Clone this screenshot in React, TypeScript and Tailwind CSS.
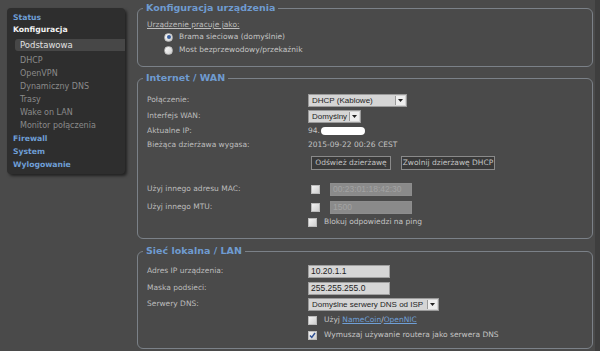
import React from 'react';

const labelFont = { fontFamily: '"DejaVu Sans", Verdana, sans-serif' };
const inputFont = { fontFamily: '"Liberation Sans", Arial, sans-serif' };

const Legend: React.FC<{ title: string }> = ({ title }) => (
  <span
    className="absolute left-[5px] top-[-8px] bg-[#4a4a4a] px-[3px] text-[9.5px] font-bold leading-[14px] text-[#6f9bd0]"
    style={labelFont}
  >
    {title}
  </span>
);

const Box: React.FC<{ title: string; className: string; children: React.ReactNode }> = ({ title, className, children }) => (
  <div className={`relative rounded-[6px] border border-[#7b8188] ${className}`}>
    <Legend title={title} />
    {children}
  </div>
);

const Row: React.FC<{ label?: string; className?: string; children?: React.ReactNode }> = ({ label, className = '', children }) => (
  <div className={`flex h-[14px] items-center ${className}`}>
    <div className="w-[170px] shrink-0 pl-[9px] text-[7.5px] text-[#bdbdbd]" style={labelFont}>
      {label}
    </div>
    <div className="flex items-center">{children}</div>
  </div>
);

const Select: React.FC<{ value: string; width: string }> = ({ value, width }) => (
  <div className={`flex h-[13px] items-stretch ${width} border border-[#9a9a9a] bg-[#d5d5d5]`}>
    <span
      className="flex-1 overflow-hidden whitespace-nowrap pl-[3px] text-[8px] leading-[11px] text-[#1e1e1e]"
      style={inputFont}
    >
      {value}
    </span>
    <span className="my-[1px] mr-[1px] flex w-[10px] shrink-0 items-center justify-center border-l border-[#9a9a9a] bg-[#eeeeee]">
      <svg width="5" height="3" viewBox="0 0 5 3">
        <path d="M0 0h5L2.5 3z" fill="#222" />
      </svg>
    </span>
  </div>
);

const TextInput: React.FC<{ value: string; width?: string; disabled?: boolean }> = ({ value, width = 'w-[82px]', disabled }) => (
  <div
    className={`h-[13px] ${width} border pl-[2px] text-[8.5px] leading-[11px] ${
      disabled ? 'border-[#8d8d8d] bg-[#8a8a8a] text-[#a3a3a3]' : 'border-[#a0a0a0] bg-[#d6d6d6] text-[#1e1e1e]'
    }`}
    style={inputFont}
  >
    {value}
  </div>
);

const Check: React.FC<{ checked?: boolean; className?: string }> = ({ checked, className = '' }) => (
  <span
    className={`flex h-[9px] w-[9px] items-center justify-center border border-[#bcbcbc] bg-gradient-to-br from-[#f4f4f4] to-[#cfcfcf] ${className}`}
  >
    {checked && (
      <svg width="7" height="7" viewBox="0 0 7 7">
        <path d="M1 3.5l1.8 2L6 1" stroke="#2d4f93" strokeWidth="1.4" fill="none" />
      </svg>
    )}
  </span>
);

const Radio: React.FC<{ checked?: boolean }> = ({ checked }) => (
  <span className="flex h-[9px] w-[9px] items-center justify-center rounded-full border border-[#bdbdbd] bg-gradient-to-br from-[#ffffff] to-[#cfcfcf]">
    {checked && <span className="h-[4px] w-[4px] rounded-full bg-[#3a5f9c]" />}
  </span>
);

const Btn: React.FC<{ children: React.ReactNode; width: string }> = ({ children, width }) => (
  <div
    className={`flex h-[14px] ${width} items-center justify-center border border-[#8a8a8a] bg-[#393939] text-[7.5px] text-[#c4c4c4]`}
    style={labelFont}
  >
    {children}
  </div>
);

const Sidebar: React.FC = () => {
  const sub = ['DHCP', 'OpenVPN', 'Dynamiczny DNS', 'Trasy', 'Wake on LAN', 'Monitor połączenia'];
  return (
    <nav
      className="ml-[7px] mt-[8px] h-[166px] w-[118px] rounded-[4px] bg-[#2e2e2e] pt-[4px] shadow-[2px_2px_3px_rgba(0,0,0,0.55)]"
      style={labelFont}
    >
      <div className="h-[12px] pl-[6px] text-[7.7px] font-bold leading-[12px] text-[#6f9fd6]">Status</div>
      <div className="h-[12px] pl-[6px] text-[7.7px] font-bold leading-[12px] text-[#f2f2f2]">Konfiguracja</div>
      <div className="ml-[8px] mt-[3px] h-[12px] rounded-l-[3px] bg-[#474747] pl-[5px] text-[8.5px] leading-[12px] text-[#e2e2e2]">
        Podstawowa
      </div>
      <div className="mt-[3px]">
        {sub.map((s) => (
          <div key={s} className="h-[13px] pl-[13px] text-[8px] leading-[13px] text-[#8a8a8a]">
            {s}
          </div>
        ))}
      </div>
      {['Firewall', 'System', 'Wylogowanie'].map((s) => (
        <div key={s} className="h-[13px] pl-[6px] text-[7.7px] font-bold leading-[13px] text-[#6f9fd6]">
          {s}
        </div>
      ))}
    </nav>
  );
};

export default function App() {
  return (
    <div className="flex h-[351px] w-[600px] overflow-hidden bg-[#4a4a4a]">
      <Sidebar />
      <main className="ml-[12px] mt-[8px] flex w-[456px] flex-col">
        <Box title="Konfiguracja urządzenia" className="h-[59px]">
          <div className="pt-[9px]" style={labelFont}>
            <div className="h-[13px] pl-[9px] text-[7.5px] leading-[13px] text-[#bdbdbd] underline">
              Urządzenie pracuje jako:
            </div>
            <div className="flex h-[12px] items-center gap-[6px] pl-[26px] text-[7.5px] text-[#c4c4c4]">
              <Radio checked />
              <span>Brama sieciowa (domyślnie)</span>
            </div>
            <div className="mt-[1px] flex h-[12px] items-center gap-[6px] pl-[26px] text-[7.5px] text-[#c4c4c4]">
              <Radio />
              <span>Most bezprzewodowy/przekaźnik</span>
            </div>
          </div>
        </Box>

        <Box title="Internet / WAN" className="mt-[11px] h-[161px]">
          <div className="pt-[14px]">
            <Row label="Połączenie:">
              <Select value="DHCP (Kablowe)" width="w-[99px]" />
            </Row>
            <Row label="Interfejs WAN:" className="mt-[2px]">
              <Select value="Domyślny" width="w-[53px]" />
            </Row>
            <Row label="Aktualne IP:" className="h-[15px]">
              <span className="text-[7.5px] text-[#c4c4c4]" style={labelFont}>
                94.
              </span>
              <span className="ml-[1px] h-[8px] w-[44px] rounded-full bg-white blur-[0.6px]" />
            </Row>
            <Row label="Bieżąca dzierżawa wygasa:">
              <span className="text-[7.5px] text-[#c4c4c4]" style={labelFont}>
                2015-09-22 00:26 CEST
              </span>
            </Row>
            <Row className="mt-[4px]">
              <div className="flex gap-[10px] pl-[3px]">
                <Btn width="w-[80px]">Odśwież dzierżawę</Btn>
                <Btn width="w-[94px]">Zwolnij dzierżawę DHCP</Btn>
              </div>
            </Row>
            <Row label="Użyj innego adresu MAC:" className="mt-[12px]">
              <Check className="ml-[3px]" />
              <span className="ml-[10px]">
                <TextInput value="00:23:01:18:42:30" disabled />
              </span>
            </Row>
            <Row label="Użyj innego MTU:" className="mt-[4px]">
              <Check className="ml-[3px]" />
              <span className="ml-[10px]">
                <TextInput value="1500" disabled />
              </span>
            </Row>
            <Row className="mt-[1px]">
              <Check />
              <span className="ml-[7px] text-[7.5px] text-[#c4c4c4]" style={labelFont}>
                Blokuj odpowiedzi na ping
              </span>
            </Row>
          </div>
        </Box>

        <Box title="Sieć lokalna / LAN" className="mt-[12px] h-[98px]">
          <div className="pt-[12px]">
            <Row label="Adres IP urządzenia:">
              <TextInput value="10.20.1.1" />
            </Row>
            <Row label="Maska podsieci:" className="mt-[3px]">
              <TextInput value="255.255.255.0" />
            </Row>
            <Row label="Serwery DNS:" className="mt-[2px]">
              <Select value="Domyślne serwery DNS od ISP" width="w-[131px]" />
            </Row>
            <Row className="mt-[2px]">
              <Check />
              <span className="ml-[7px] text-[7.5px] text-[#c4c4c4]" style={labelFont}>
                Użyj{' '}
                <span className="text-[#6f9fd6] underline">NameCoin</span>/
                <span className="text-[#6f9fd6] underline">OpenNIC</span>
              </span>
            </Row>
            <Row className="mt-[1px]">
              <Check checked />
              <span className="ml-[7px] text-[7.5px] text-[#c4c4c4]" style={labelFont}>
                Wymuszaj używanie routera jako serwera DNS
              </span>
            </Row>
          </div>
        </Box>
      </main>
      <div className="ml-auto w-[5px] bg-[#3e3e3e]" />
    </div>
  );
}
